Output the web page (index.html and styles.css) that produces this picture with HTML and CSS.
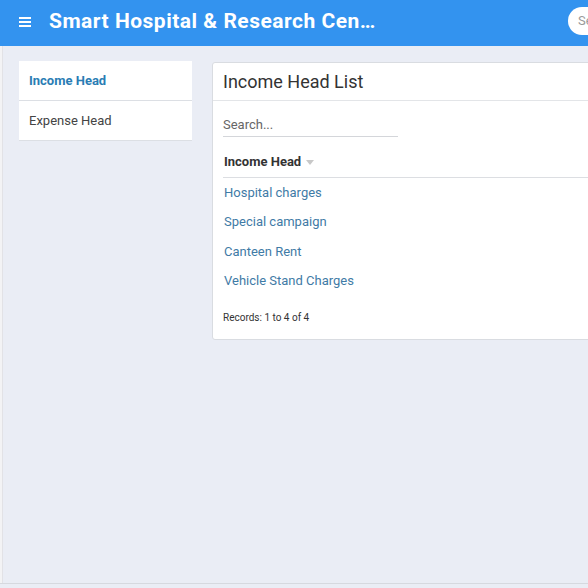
FILE: index.html
```html
<!DOCTYPE html>
<html>
<head>
<meta charset="utf-8">
<link rel="stylesheet" href="styles.css">
</head>
<body>
<header class="topbar">
  <span class="burger">
    <svg width="12" height="10" viewBox="0 0 12 10"><rect x="0" y="0" width="12" height="2" fill="#fff"/><rect x="0" y="4" width="12" height="2" fill="#fff"/><rect x="0" y="8" width="12" height="2" fill="#fff"/></svg>
  </span>
  <span class="brand">Smart Hospital &amp; Research Center</span>
  <span class="spacer"></span>
  <span class="topsearch">Search</span>
</header>
<div class="frame">
  <div class="edge"></div>
  <main class="content">
    <nav class="side">
      <a class="side-item active">Income Head</a>
      <a class="side-item">Expense Head</a>
    </nav>
    <section class="card">
      <div class="card-head">Income Head List</div>
      <div class="card-body">
        <div class="search">Search...</div>
        <div class="th">Income Head <span class="caret"></span></div>
        <div class="row">Hospital charges</div>
        <div class="row">Special campaign</div>
        <div class="row">Canteen Rent</div>
        <div class="row">Vehicle Stand Charges</div>
        <div class="records">Records: 1 to 4 of 4</div>
      </div>
    </section>
  </main>
</div>
</body>
</html>
```
FILE: styles.css
```css
* { box-sizing: border-box; }
html, body { margin: 0; height: 100%; }
body {
  font-family: Roboto, "Noto Sans", sans-serif;
  background: #eaedf5;
  overflow: hidden;
  width: 588px;
  height: 588px;
}
.topbar {
  height: 46px;
  background: #3393ef;
  display: flex;
  align-items: center;
  padding-left: 19px;
  white-space: nowrap;
  overflow: hidden;
}
.burger { display: flex; width: 12px; margin-top: -2px; }
.brand {
  color: #fff;
  font-weight: 700;
  font-size: 21px;
  margin-left: 18px;
  margin-top: -5px;
  max-width: 329px;
  overflow: hidden;
  text-overflow: ellipsis;
  letter-spacing: 0.5px;
}
.spacer { flex: 1; }
.topsearch {
  flex: none;
  background: #fff;
  height: 28px;
  width: 20px;
  overflow: hidden;
  border-radius: 14px 0 0 14px;
  padding-left: 10px;
  line-height: 28px;
  font-size: 13px;
  color: #999;
  margin-top: -4px;
}
.frame {
  display: flex;
  height: 538px;
  border-bottom: 1px solid #d6d9df;
}
.edge {
  width: 3px;
  background: #f3f3f5;
  border-right: 1px solid #e2e2e6;
}
.content {
  flex: 1;
  display: flex;
  align-items: flex-start;
  padding: 15px 0 0 16px;
  gap: 20px;
  min-width: 0;
}
.side {
  width: 173px;
  flex: none;
  background: #fff;
  display: flex;
  flex-direction: column;
  border-bottom: 1px solid #dcdfe4;
}
.side-item {
  height: 39px;
  display: flex;
  align-items: center;
  padding-left: 10px;
  font-size: 13px;
  color: #444;
}
.side-item + .side-item { border-top: 1px solid #dcdfe4; height: 40px; }
.side-item.active { color: #2a7db4; font-weight: 700; }
.card {
  flex: none;
  width: 420px;
  margin-top: 1px;
  background: #fff;
  border: 1px solid #d9dce1;
  border-radius: 3px;
  height: 278px;
}
.card-head {
  height: 38px;
  border-bottom: 1px solid #e3e5e8;
  padding-left: 10px;
  display: flex;
  align-items: center;
  font-size: 18px;
  color: #333;
}
.card-body { padding: 0 0 0 10px; }
.search {
  width: 175px;
  margin-top: 15px;
  height: 21px;
  border-bottom: 1px solid #d4d6da;
  font-size: 13px;
  color: #666;
  line-height: 17px;
}
.th {
  margin-top: 13px;
  height: 28px;
  border-bottom: 1px solid #dcdee2;
  font-size: 13px;
  font-weight: 700;
  color: #333;
  padding-left: 1px;
  line-height: 24px;
}
.caret {
  display: inline-block;
  width: 0; height: 0;
  border-left: 4px solid transparent;
  border-right: 4px solid transparent;
  border-top: 5px solid #c8c8c8;
  vertical-align: middle;
  margin-left: 2px;
}
.row {
  height: 29.3px;
  line-height: 29px;
  font-size: 13px;
  color: #3f7ba6;
  padding-left: 1px;
}
.row:last-of-type { border-bottom: 1px solid #eceef0; }
.records {
  font-size: 10px;
  color: #333;
  margin-top: 17px;
}
```
